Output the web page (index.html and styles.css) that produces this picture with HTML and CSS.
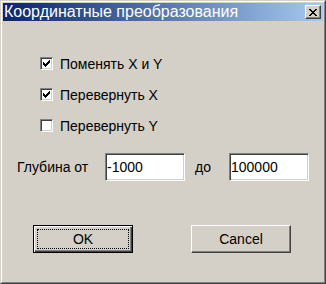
FILE: index.html
```html
<!DOCTYPE html>
<html lang="ru">
<head>
    <meta charset="UTF-8">
    <title>Координатные преобразования</title>
    <link rel="stylesheet" href="styles.css">
</head>
<body>
    <div class="window">
        <div class="frame">
            <div class="titlebar">
                <span class="title">Координатные преобразования</span>
                <span class="close-btn">
                    <svg width="8" height="7" viewBox="0 0 8 7" shape-rendering="crispEdges">
                        <path d="M0 0h2v1H0z M6 0h2v1H6z M1 1h2v1H1z M5 1h2v1H5z M2 2h4v1H2z M3 3h2v1H3z M2 4h4v1H2z M1 5h2v1H1z M5 5h2v1H5z M0 6h2v1H0z M6 6h2v1H6z" fill="#000"/>
                    </svg>
                </span>
            </div>

            <div class="client">
                <div class="checks">
                    <label class="check-row">
                        <span class="checkbox">
                            <svg width="7" height="7" viewBox="0 0 7 7" shape-rendering="crispEdges"><path d="M0 2h1v3H0z M1 3h1v3H1z M2 4h1v3H2z M3 3h1v3H3z M4 2h1v3H4z M5 1h1v3H5z M6 0h1v3H6z" fill="#000"/></svg>
                        </span>
                        Поменять X и Y
                    </label>
                    <label class="check-row">
                        <span class="checkbox">
                            <svg width="7" height="7" viewBox="0 0 7 7" shape-rendering="crispEdges"><path d="M0 2h1v3H0z M1 3h1v3H1z M2 4h1v3H2z M3 3h1v3H3z M4 2h1v3H4z M5 1h1v3H5z M6 0h1v3H6z" fill="#000"/></svg>
                        </span>
                        Перевернуть X
                    </label>
                    <label class="check-row">
                        <span class="checkbox"></span>
                        Перевернуть Y
                    </label>
                </div>

                <div class="depth-row">
                    <span class="depth-label">Глубина от</span>
                    <input class="field" type="text" value="-1000">
                    <span class="to-label">до</span>
                    <input class="field" type="text" value="100000">
                </div>

                <div class="buttons">
                    <button class="btn btn-default"><span class="focus">OK</span></button>
                    <button class="btn">Cancel</button>
                </div>
            </div>
        </div>
    </div>
</body>
</html>
```

FILE: styles.css
```css
body {
    margin: 0;
    font-family: "Liberation Sans", Arial, sans-serif;
    font-size: 14px;
    color: #000;
}
.window {
    width: 326px;
    height: 284px;
    box-sizing: border-box;
    background-color: #d4d0c8;
    border: 1px solid;
    border-color: #d4d0c8 #404040 #404040 #d4d0c8;
}
.frame {
    height: 100%;
    box-sizing: border-box;
    border: 1px solid;
    border-color: #fff #808080 #808080 #fff;
    padding: 1px;
}
.titlebar {
    height: 18px;
    display: flex;
    align-items: center;
    justify-content: space-between;
    background: linear-gradient(to right, #0a246a, #a6caf0);
    color: #fff;
    padding-left: 1px;
}
.title {
    font-size: 16px;
    line-height: 18px;
    white-space: nowrap;
}
.close-btn {
    width: 16px;
    height: 14px;
    box-sizing: border-box;
    margin-right: 2px;
    display: flex;
    align-items: center;
    justify-content: center;
    background-color: #d4d0c8;
    border: 1px solid;
    border-color: #fff #404040 #404040 #fff;
    box-shadow: inset -1px -1px #808080;
}
.client {
    padding-top: 36px;
}
.checks {
    display: flex;
    flex-direction: column;
    gap: 18px;
    padding-left: 37px;
}
.check-row {
    display: flex;
    align-items: center;
    gap: 7px;
    height: 13px;
    white-space: nowrap;
}
.checkbox {
    width: 13px;
    height: 13px;
    box-sizing: border-box;
    display: flex;
    align-items: center;
    justify-content: center;
    background-color: #fff;
    border: 1px solid;
    border-color: #808080 #fff #fff #808080;
    box-shadow: inset 1px 1px #404040, inset -1px -1px #d4d0c8;
}
.depth-row {
    display: flex;
    align-items: center;
    height: 28px;
    margin-top: 21px;
    padding-left: 14px;
}
.depth-label {
    width: 88px;
}
.to-label {
    width: 34px;
    padding-left: 10px;
}
.field {
    width: 80px;
    height: 28px;
    box-sizing: border-box;
    margin: 0;
    padding: 0 1px;
    font: inherit;
    color: #000;
    background-color: #fff;
    border: 1px solid;
    border-color: #808080 #fff #fff #808080;
    box-shadow: inset 1px 1px #404040, inset -1px -1px #d4d0c8;
    outline: none;
}
.buttons {
    display: flex;
    gap: 58px;
    margin-top: 44px;
    padding-left: 30px;
}
.btn {
    width: 100px;
    height: 28px;
    box-sizing: border-box;
    display: flex;
    align-items: center;
    justify-content: center;
    margin: 0;
    padding: 0;
    font: inherit;
    color: #000;
    background-color: #d4d0c8;
    border: 1px solid;
    border-color: #fff #404040 #404040 #fff;
    box-shadow: inset -1px -1px #808080;
}
.btn-default {
    border-color: #000;
    box-shadow: inset 1px 1px #fff, inset -1px -1px #404040, inset -2px -2px #808080;
    align-items: stretch;
}
.focus {
    flex: 1;
    margin: 3px;
    display: flex;
    align-items: center;
    justify-content: center;
    border: 1px dotted #000;
}
```
